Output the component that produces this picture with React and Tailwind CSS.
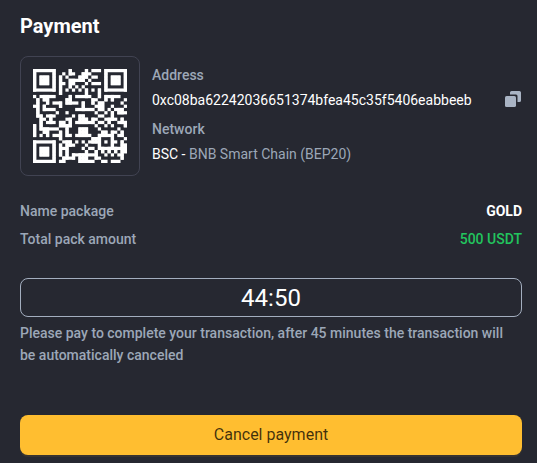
import React, { useMemo } from "react";

const ADDRESS = "0xc08ba62242036651374bfea45c35f5406eabbeeb";
const SIZE = 29;
const DATA_WORDS = 44;
const EC_WORDS = 26;

function gfMul(a, b) {
  let r = 0;
  for (let i = 7; i >= 0; i--) {
    r = (r << 1) ^ ((r >>> 7) * 0x11d);
    r ^= ((b >>> i) & 1) * a;
  }
  return r;
}

function errorWords(data) {
  const gen = new Array(EC_WORDS).fill(0);
  gen[EC_WORDS - 1] = 1;
  let root = 1;
  for (let i = 0; i < EC_WORDS; i++) {
    for (let j = 0; j < EC_WORDS; j++) {
      gen[j] = gfMul(gen[j], root);
      if (j + 1 < EC_WORDS) gen[j] ^= gen[j + 1];
    }
    root = gfMul(root, 2);
  }
  const rem = new Array(EC_WORDS).fill(0);
  for (const b of data) {
    const f = b ^ rem.shift();
    rem.push(0);
    gen.forEach((c, i) => {
      rem[i] ^= gfMul(c, f);
    });
  }
  return rem;
}

// Version 3, level M, mask 2 QR symbol in byte mode.
function buildQr(text) {
  let bits = "0100" + text.length.toString(2).padStart(8, "0");
  for (const ch of text) bits += ch.charCodeAt(0).toString(2).padStart(8, "0");
  bits += "0000";
  const data = [];
  for (let i = 0; i < DATA_WORDS; i++) data.push(parseInt(bits.slice(i * 8, i * 8 + 8), 2));
  const words = data.concat(errorWords(data));

  const m = Array.from({ length: SIZE }, () => new Array(SIZE).fill(null));
  const finder = (cy, cx) => {
    for (let dy = -4; dy <= 4; dy++)
      for (let dx = -4; dx <= 4; dx++) {
        const y = cy + dy;
        const x = cx + dx;
        if (y < 0 || x < 0 || y >= SIZE || x >= SIZE) continue;
        const d = Math.max(Math.abs(dx), Math.abs(dy));
        m[y][x] = d !== 2 && d !== 4 ? 1 : 0;
      }
  };
  for (let i = 0; i < SIZE; i++) m[6][i] = m[i][6] = i % 2 === 0 ? 1 : 0;
  finder(3, 3);
  finder(3, SIZE - 4);
  finder(SIZE - 4, 3);
  for (let dy = -2; dy <= 2; dy++)
    for (let dx = -2; dx <= 2; dx++)
      m[22 + dy][22 + dx] = Math.max(Math.abs(dx), Math.abs(dy)) !== 1 ? 1 : 0;

  const fmt = "101111001111100".split("").map(Number);
  const first = [[8, 0], [8, 1], [8, 2], [8, 3], [8, 4], [8, 5], [8, 7], [8, 8], [7, 8], [5, 8], [4, 8], [3, 8], [2, 8], [1, 8], [0, 8]];
  first.forEach(([y, x], i) => {
    m[y][x] = fmt[i];
  });
  for (let i = 0; i < 7; i++) m[SIZE - 1 - i][8] = fmt[i];
  for (let i = 7; i < 15; i++) m[8][SIZE - 15 + i] = fmt[i];
  m[SIZE - 8][8] = 1;

  let n = 0;
  for (let right = SIZE - 1; right >= 1; right -= 2) {
    if (right === 6) right = 5;
    for (let v = 0; v < SIZE; v++)
      for (let j = 0; j < 2; j++) {
        const x = right - j;
        const y = ((right + 1) & 2) === 0 ? SIZE - 1 - v : v;
        if (m[y][x] !== null) continue;
        const bit = n < words.length * 8 ? (words[n >> 3] >> (7 - (n & 7))) & 1 : 0;
        n++;
        m[y][x] = bit ^ (x % 3 === 0 ? 1 : 0);
      }
  }
  return m;
}

// Horizontal and vertical runs together, so that no seam shows between modules.
function runs(m) {
  const out = [];
  for (let a = 0; a < SIZE; a++) {
    for (let b = 0; b < SIZE; b++) {
      let w = 0;
      while (b + w < SIZE && m[a][b + w]) w++;
      if (w) out.push({ x: b, y: a, w, h: 1 });
      b += w;
    }
    for (let b = 0; b < SIZE; b++) {
      let h = 0;
      while (b + h < SIZE && m[b + h][a]) h++;
      if (h > 1) out.push({ x: a, y: b, w: 1, h });
      b += h;
    }
  }
  return out;
}

function QrCode({ value }) {
  const rects = useMemo(() => runs(buildQr(value)), [value]);
  return (
    <svg viewBox="0 0 29 29" className="size-[94px]" fill="#fff">
      {rects.map((r, i) => (
        <rect key={i} x={r.x} y={r.y} width={r.w} height={r.h} />
      ))}
    </svg>
  );
}

function CopyIcon() {
  return (
    <svg viewBox="0 0 16 16" className="mr-px mb-0.5 size-4" fill="#a9b4c4">
      <rect x="0" y="5" width="11" height="11" rx="1.6" />
      <path d="M5 1.6Q5 0 6.600 0H14.400Q16 0 16 1.600V9.400Q16 11 14.400 11H12.500V5Q12.500 3.500 11 3.500H5Z" />
    </svg>
  );
}

export default function App() {
  return (
    <div className="h-[463px] w-[537px] overflow-hidden bg-[#262831] pr-[15px] pl-5 font-['Roboto',sans-serif] text-sm font-medium text-[#9ca7b7]">
      <h1 className="pt-3 text-xl leading-7 font-bold text-white">Payment</h1>
      <div className="mt-4 flex gap-3">
        <div className="flex size-[120px] shrink-0 items-center justify-center rounded-lg border border-[#414352]">
          <QrCode value={ADDRESS} />
        </div>
        <div className="flex-1 pt-2">
          <div className="leading-[22px]">Address</div>
          <div className="mt-[3px] flex items-center justify-between leading-[22px] font-normal text-white">
            <span>{ADDRESS}</span>
            <CopyIcon />
          </div>
          <div className="mt-[7px] leading-[22px]">Network</div>
          <div className="mt-[3px] leading-[22px] font-normal">
            <span className="text-white">BSC - </span>BNB Smart Chain (BEP20)
          </div>
        </div>
      </div>
      <div className="mt-6 flex justify-between leading-[22px]">
        <span>Name package</span>
        <span className="font-bold text-white">GOLD</span>
      </div>
      <div className="mt-1.5 flex justify-between leading-[22px]">
        <span>Total pack amount</span>
        <span className="text-[#22c55e]">500 USDT</span>
      </div>
      <div className="mt-7 flex h-[39px] items-center justify-center rounded-lg border border-[#a3aebf] text-2xl font-normal text-white">
        44:50
      </div>
      <p className="mt-[5px] max-w-[495px] leading-[22px]">
        Please pay to complete your transaction, after 45 minutes the transaction will be automatically canceled
      </p>
      <button className="mt-[49px] flex h-10 w-full items-center justify-center rounded-lg bg-[#ffbe30] text-base font-normal text-black/75 shadow-[0_2px_0_rgba(255,190,48,0.08)]">
        Cancel payment
      </button>
    </div>
  );
}
